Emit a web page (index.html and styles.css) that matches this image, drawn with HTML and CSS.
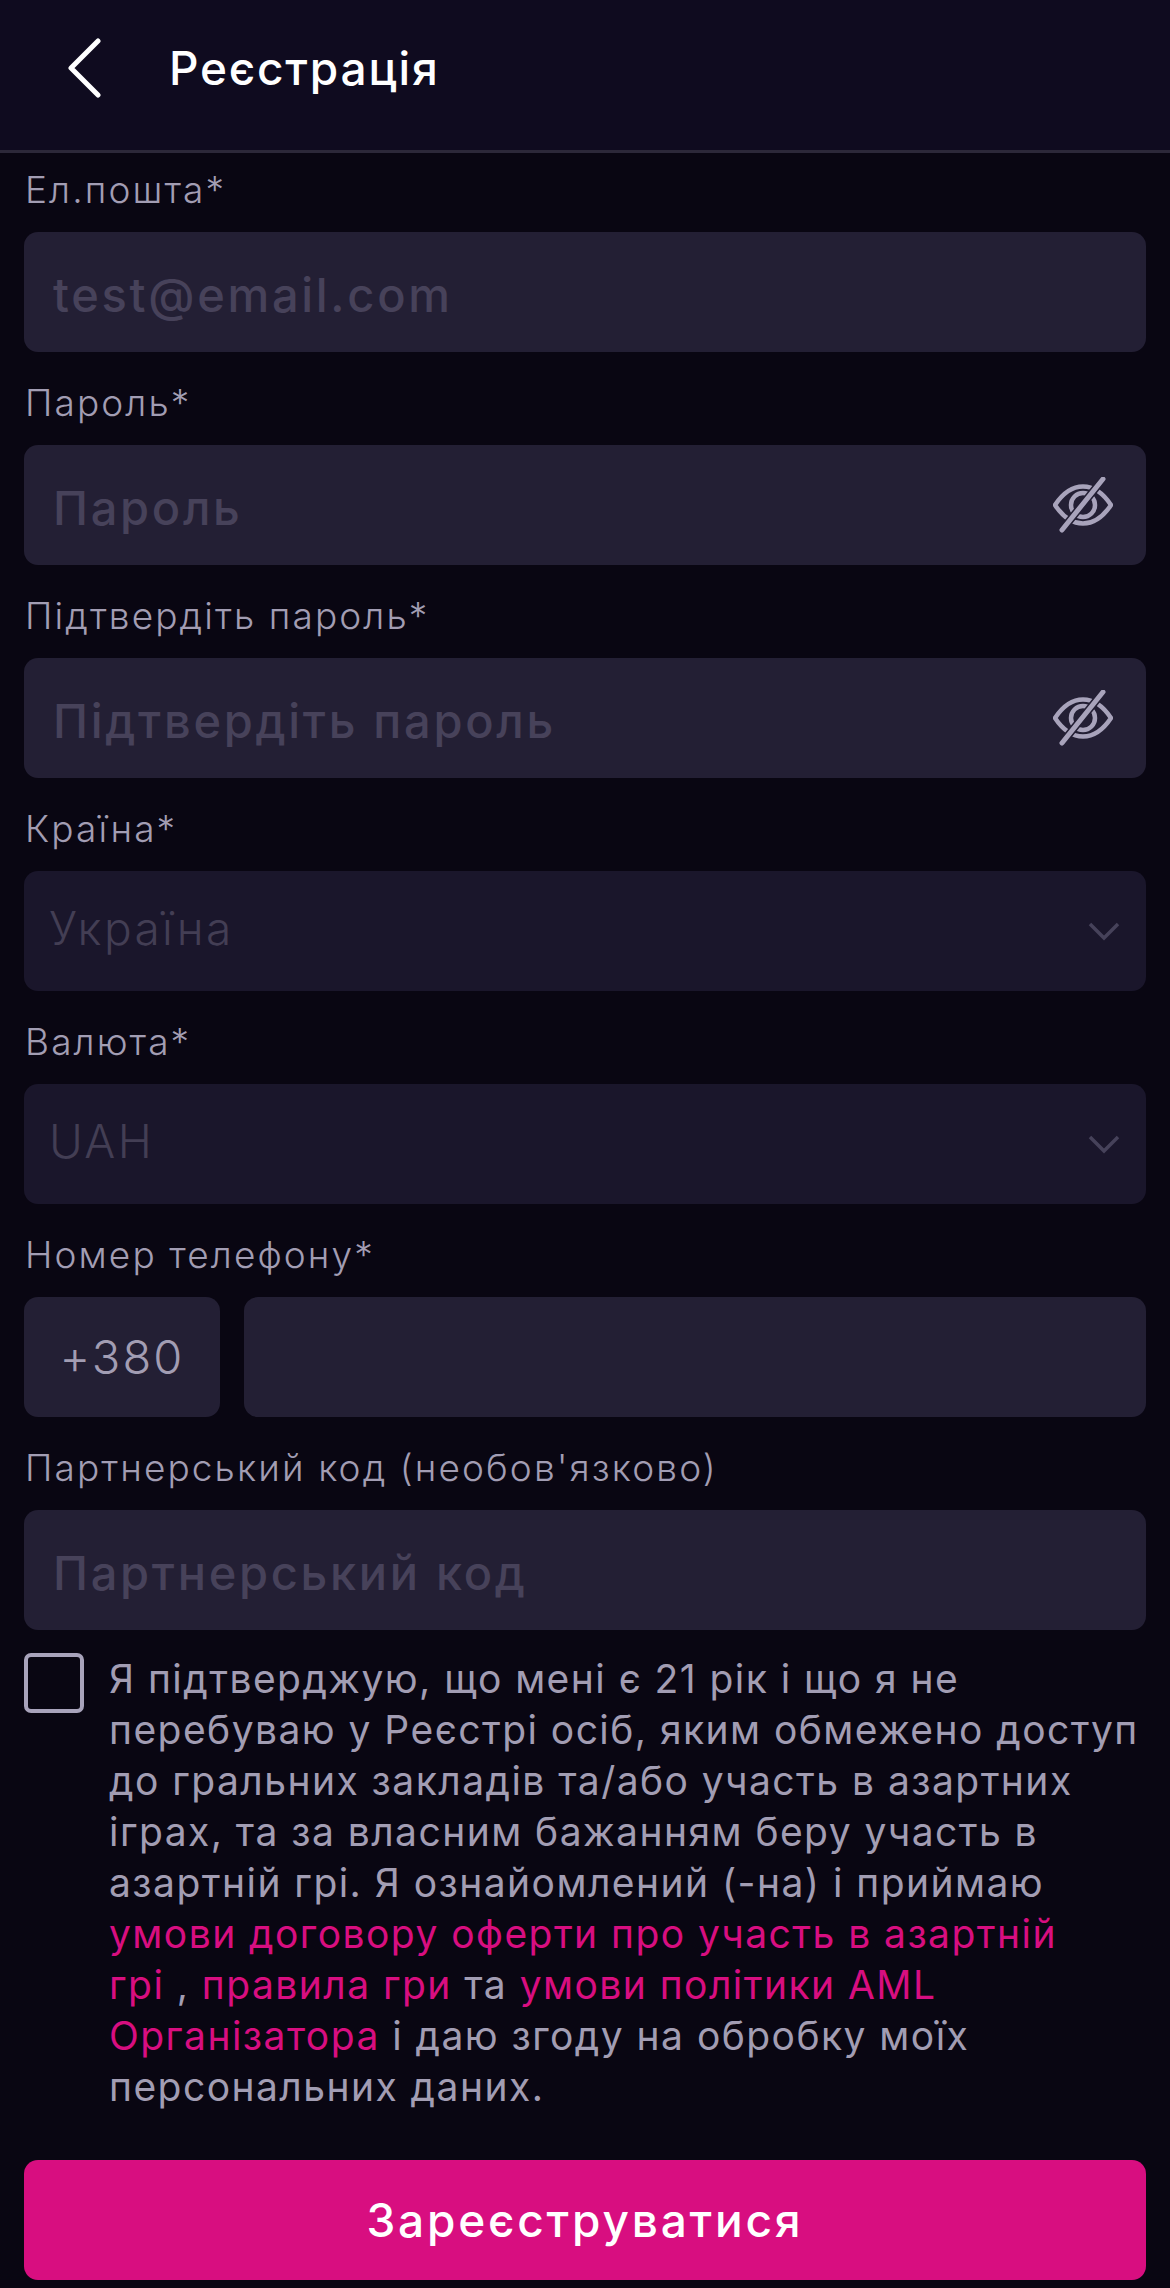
FILE: index.html
```html
<!DOCTYPE html>
<html lang="uk">
<head>
    <meta charset="UTF-8">
    <meta name="viewport" content="width=device-width,initial-scale=1.0" />
    <title>Реєстрація</title>
    <link rel="stylesheet" href="styles.css">
</head>
<body>
    <header class="topbar">
        <svg class="back" width="34" height="60" viewBox="0 0 34 60">
            <path d="M31 3 L4 30 L31 57" fill="none" stroke="#fff" stroke-width="5" stroke-linecap="round" stroke-linejoin="round" />
        </svg>
        <h1 class="title">Реєстрація</h1>
    </header>
    <form class="form">
        <div class="field">
            <label for="email">Ел.пошта*</label>
            <div class="box"><input id="email" type="text" placeholder="test@email.com" /></div>
        </div>
        <div class="field">
            <label for="pass">Пароль*</label>
            <div class="box">
                <input id="pass" type="password" placeholder="Пароль" />
                <svg class="eye" width="60" height="56" viewBox="0 0 60 56">
                    <path d="M2 28 C10 16 20 9.500 30 9.500 C40 9.500 50 16 58 28 C50 40 40 46.500 30 46.500 C20 46.500 10 40 2 28 Z" fill="none" stroke="#a8a3bb" stroke-width="4.500" stroke-linejoin="round" />
                    <circle cx="30" cy="28" r="12" fill="none" stroke="#a8a3bb" stroke-width="4.500" />
                    <path d="M9 53 L50 2" stroke="#231f34" stroke-width="8" />
                    <path d="M9 53 L50 2" stroke="#a8a3bb" stroke-width="5" stroke-linecap="round" />
                </svg>
            </div>
        </div>
        <div class="field">
            <label for="pass2">Підтвердіть пароль*</label>
            <div class="box">
                <input id="pass2" type="password" placeholder="Підтвердіть пароль" />
                <svg class="eye" width="60" height="56" viewBox="0 0 60 56">
                    <path d="M2 28 C10 16 20 9.500 30 9.500 C40 9.500 50 16 58 28 C50 40 40 46.500 30 46.500 C20 46.500 10 40 2 28 Z" fill="none" stroke="#a8a3bb" stroke-width="4.500" stroke-linejoin="round" />
                    <circle cx="30" cy="28" r="12" fill="none" stroke="#a8a3bb" stroke-width="4.500" />
                    <path d="M9 53 L50 2" stroke="#231f34" stroke-width="8" />
                    <path d="M9 53 L50 2" stroke="#a8a3bb" stroke-width="5" stroke-linecap="round" />
                </svg>
            </div>
        </div>
        <div class="field">
            <label>Країна*</label>
            <div class="box select">
                <span>Україна</span>
                <svg class="arrow" width="32" height="20" viewBox="0 0 32 20">
                    <path d="M2 3 L16 17 L30 3" fill="none" stroke="#46425a" stroke-width="3.500" />
                </svg>
            </div>
        </div>
        <div class="field">
            <label>Валюта*</label>
            <div class="box select">
                <span>UAH</span>
                <svg class="arrow" width="32" height="20" viewBox="0 0 32 20">
                    <path d="M2 3 L16 17 L30 3" fill="none" stroke="#46425a" stroke-width="3.500" />
                </svg>
            </div>
        </div>
        <div class="field">
            <label for="phone">Номер телефону*</label>
            <div class="phone">
                <div class="box code">+380</div>
                <div class="box"><input id="phone" type="text" /></div>
            </div>
        </div>
        <div class="field">
            <label for="partner">Партнерський код (необов'язково)</label>
            <div class="box"><input id="partner" type="text" placeholder="Партнерський код" /></div>
        </div>
        <div class="terms">
            <span class="check"></span>
            <p>Я підтверджую, що мені є 21 рік і що я не перебуваю у Реєстрі осіб, яким обмежено доступ до гральних закладів та/або участь в азартних іграх, та за власним бажанням беру участь в азартній грі. Я ознайомлений (-на) і приймаю <a href="#">умови договору оферти про участь в азартній<br>грі</a> , <a href="#">правила гри</a> та <a href="#">умови політики AML Організатора</a> і даю згоду на обробку моїх персональних даних.</p>
        </div>
        <button class="submit" type="button">Зареєструватися</button>
    </form>
</body>
</html>
```

FILE: styles.css
```css
* {
    box-sizing: border-box;
}
body {
    margin: 0;
    background: #090612;
    font-family: Inter, "Noto Sans", sans-serif;
    color: #a29db3;
}
.topbar {
    display: flex;
    align-items: center;
    height: 153px;
    padding: 0 0 14px 67px;
    background: #0f0b1f;
    border-bottom: 3px solid #2c2839;
}
.back {
    flex: none;
}
.title {
    margin: 0 0 0 68px;
    font-size: 46px;
    font-weight: 500;
    letter-spacing: 1.800px;
    color: #fff;
}
.form {
    padding: 14px 24px 0;
}
.field {
    margin-bottom: 28px;
}
.field label {
    display: block;
    height: 46px;
    margin-bottom: 19px;
    padding-left: 1px;
    font-size: 37px;
    font-weight: 350;
    line-height: 46px;
    letter-spacing: 2.100px;
}
.box {
    display: flex;
    align-items: center;
    flex: 1;
    height: 120px;
    padding: 0 28px 0 29px;
    background: #231f34;
    border-radius: 14px;
}
.box input {
    flex: 1;
    min-width: 0;
    padding: 5px 0 0;
    border: none;
    outline: none;
    background: transparent;
    font-family: inherit;
    font-size: 47px;
    font-weight: 550;
    letter-spacing: 2.700px;
    color: #a29db3;
}
.box input::placeholder {
    color: #47425a;
    opacity: 1;
}
.eye {
    flex: none;
    margin-right: 5px;
}
.select {
    justify-content: space-between;
    padding: 0 26px 0 25px;
    background: #1a162b;
    font-size: 46px;
    font-weight: 350;
    letter-spacing: 2.400px;
    color: #433e54;
}
.select span {
    padding-bottom: 7px;
}
.phone {
    display: flex;
    gap: 24px;
}
.code {
    flex: none;
    justify-content: center;
    width: 196px;
    padding: 0 0 2px;
    font-size: 47px;
    font-weight: 350;
    letter-spacing: 2.200px;
}
.terms {
    display: flex;
    margin-top: -5px;
}
.check {
    flex: none;
    width: 60px;
    height: 60px;
    margin-right: 25px;
    border: 4px solid #a8a3bb;
    border-radius: 7px;
}
.terms p {
    margin: 0;
    font-size: 39px;
    font-weight: 380;
    line-height: 51px;
    letter-spacing: 1.450px;
}
.terms a {
    color: #d80e80;
    text-decoration: none;
}
.submit {
    display: block;
    width: 100%;
    height: 120px;
    margin-top: 48px;
    border: none;
    border-radius: 14px;
    background: #d80e80;
    font-family: inherit;
    font-size: 46px;
    font-weight: 500;
    letter-spacing: 2.800px;
    color: #fff;
}
```
